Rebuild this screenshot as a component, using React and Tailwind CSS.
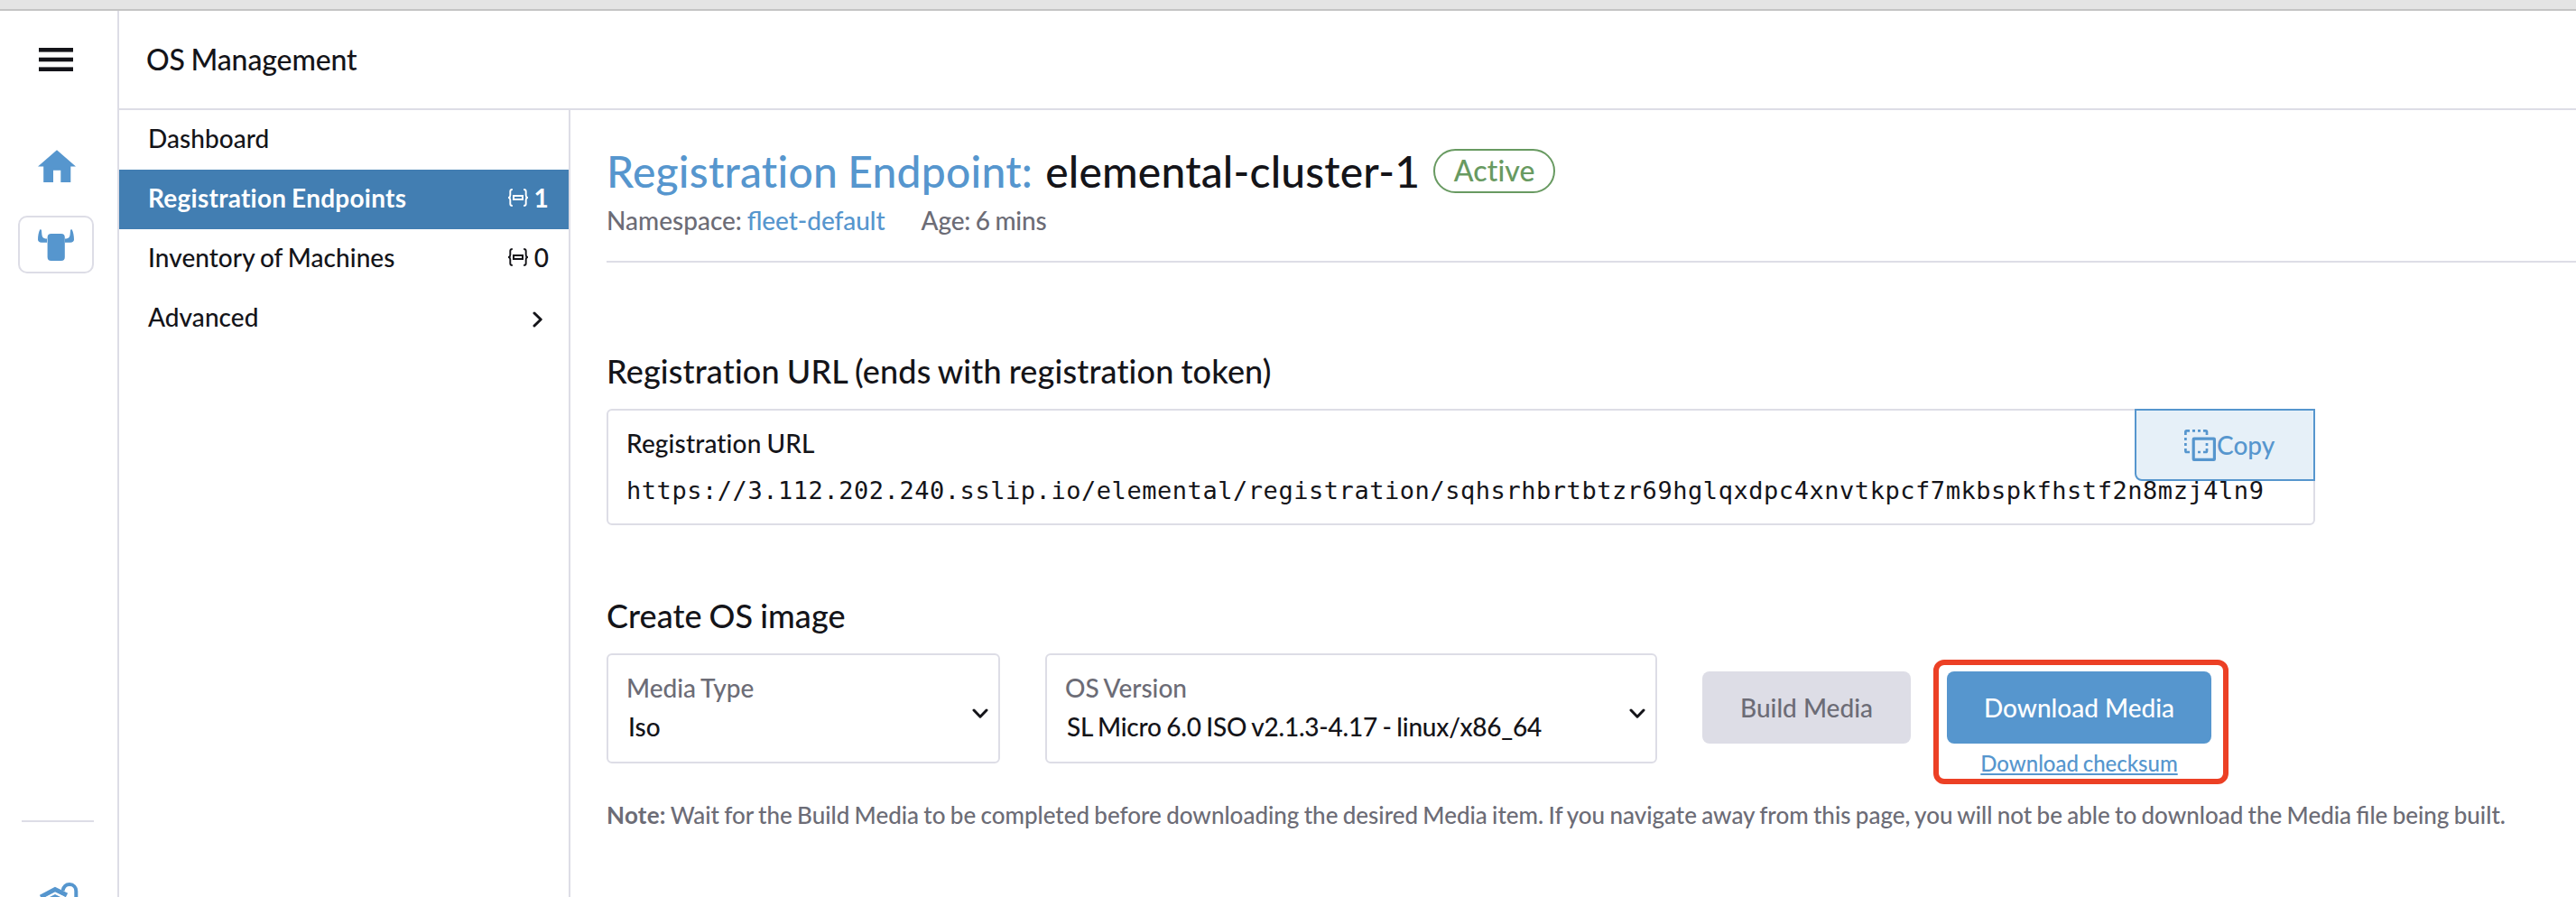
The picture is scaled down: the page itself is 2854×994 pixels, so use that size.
const Hamburger = () => (
  <svg className="block" width="38" height="26" viewBox="0 0 38 26" fill="#141419">
    <rect width="38" height="4.6" />
    <rect y="10.7" width="38" height="4.6" />
    <rect y="21.4" width="38" height="4.6" />
  </svg>
);

const Home = () => (
  <svg className="block" width="42" height="36" viewBox="0 0 42 36" fill="#5696ce">
    <path d="M21 0.3 42 18.5H36.3V36H25.3V22.8H17V36H6.2V18.5H0Z" />
  </svg>
);

const Steer = () => (
  <svg className="block" width="40" height="36" viewBox="0 0 40 36" fill="#5696ce">
    <rect x="10.6" y="5" width="19.2" height="30" rx="4" />
    <path d="M2.2 0.6C3 -0.2 3.8 0.2 4 1.4L4.4 6C4.8 9 6 10 8.5 10.4H10V14.8H4C1.5 14.8 0 13.4 0 11.5C0 8 0.8 3 2.2 0.6Z" />
    <path d="M37.8 0.6C37 -0.2 36.2 0.2 36 1.4L35.6 6C35.2 9 34 10 31.5 10.4H30V14.8H36C38.5 14.8 40 13.4 40 11.5C40 8 39.2 3 37.8 0.6Z" />
  </svg>
);

const Cluster = () => (
  <svg className="block" width="44" height="16" viewBox="0 0 44 16" fill="none" stroke="#5696ce">
    <path d="M1 16 17 7.5 30 14" strokeWidth="5" />
    <path d="M4 18 17 11.5 27 16" stroke="#fff" strokeWidth="1" />
    <path d="M8 17.5 17 13 26 17.5Z" fill="#5696ce" stroke="none" />
    <path d="M25.5 9C26.5 4.5 29.5 2 33 2C37.6 2 40.3 5.5 40.3 9.5V18" strokeWidth="4" />
  </svg>
);

const Namespaced = () => (
  <svg className="block" width="22" height="20" viewBox="0 0 22 20" fill="none" stroke="currentColor" strokeWidth="1.9">
    <path d="M4.8 1Q2.3 1 2.3 3V7.5Q2.3 9.4 0.7 10Q2.3 10.6 2.3 12.5V17Q2.3 19 4.8 19" />
    <path d="M17.2 1Q19.7 1 19.7 3V7.5Q19.7 9.4 21.3 10Q19.7 10.6 19.7 12.5V17Q19.7 19 17.2 19" />
    <rect x="6" y="8" width="10" height="4" strokeWidth="2" />
  </svg>
);

const Chevron = ({ className }) => (
  <svg className={className} width="18" height="12" viewBox="0 0 18 12" fill="none" stroke="#141419" strokeWidth="3" strokeLinecap="round" strokeLinejoin="round">
    <path d="M2 2 9 9.2 16 2" />
  </svg>
);

const CopyIcon = () => (
  <svg className="block" width="35" height="35" viewBox="0 0 35 35" fill="none" stroke="#5696ce">
    <rect x="10.2" y="10.2" width="23.2" height="23.2" rx="0.6" strokeWidth="3.2" />
    <path d="M1.4 6V2.6Q1.4 1.4 2.6 1.4H6M9 1.4H12M15 1.4H18M21 1.4H23.8Q25 1.4 25 2.6V6M1.4 9V12M1.4 15V18M1.4 21V23.8Q1.4 25 2.6 25H6M15 25H18M21 25H23.8Q25 25 25 23.8V21M25 15V18" strokeWidth="2.7" />
  </svg>
);

function NavItem({ label, count, active, children }) {
  return (
    <li
      className={
        active
          ? "flex h-[66px] items-center justify-between bg-[#427eb2] pr-[22px] pb-1 pl-8 font-bold tracking-[0.25px] text-white"
          : "flex h-[66px] items-center justify-between pr-[22px] pb-1 pl-8 tracking-[0.05px]"
      }
    >
      <span>{label}</span>
      {count !== undefined && (
        <span className="flex items-center gap-[7px]">
          <Namespaced />
          <span>{count}</span>
        </span>
      )}
      {children}
    </li>
  );
}

function Select({ label, value, className, valueClass }) {
  return (
    <div className={`relative h-[122px] rounded-md border-2 border-[#dddde6] pt-[17px] pl-5 ${className}`}>
      <div className="h-[42px] leading-[38px] text-[#6c6c76]">{label}</div>
      <div className={`pl-0.5 leading-[40px] ${valueClass}`}>{value}</div>
      <Chevron className="absolute top-[59px] right-[11px]" />
    </div>
  );
}

export default function App() {
  return (
    <div className="flex h-[994px] w-[2854px] flex-col overflow-hidden bg-white font-['Lato',sans-serif] text-[28px] leading-[40px] font-medium whitespace-nowrap text-[#141419] [word-spacing:-0.045em]">
      <div className="h-3 shrink-0 border-b-2 border-[#c4c4c4] bg-[#e4e4e4]" />
      <div className="flex min-h-0 flex-1">
        <aside className="flex w-[132px] shrink-0 flex-col border-r-2 border-[#dddde6]">
          <button className="mt-[41px] ml-[43px] w-[38px]"><Hamburger /></button>
          <a className="mt-[87px] ml-[42px]"><Home /></a>
          <a className="mt-[37px] ml-5 flex h-16 w-[84px] justify-center rounded-[10px] border-2 border-[#dddde6] pt-[13px]"><Steer /></a>
          <div className="mt-[606px] ml-6 h-0.5 w-20 shrink-0 bg-[#dddde6]" />
          <a className="mt-[67px] ml-[44px]"><Cluster /></a>
        </aside>
        <div className="flex min-w-0 flex-1 flex-col">
          <header className="flex h-[110px] shrink-0 items-center border-b-2 border-[#dddde6] pl-[30px] text-[32px] tracking-[-0.13px]">OS Management</header>
          <div className="flex min-h-0 flex-1">
            <nav className="w-[500px] shrink-0 border-r-2 border-[#dddde6]">
              <ul>
                <NavItem label="Dashboard" />
                <NavItem label="Registration Endpoints" count={1} active />
                <NavItem label="Inventory of Machines" count={0} />
                <NavItem label="Advanced">
                  <Chevron className="mt-[5px] mr-[3px] -rotate-90" />
                </NavItem>
              </ul>
            </nav>
            <main className="flex min-w-0 flex-1 flex-col pl-10">
              <div className="mt-[38px] flex h-[60px] items-center">
                <h1 className="flex gap-[14px] text-[48px] leading-[60px]">
                  <span className="tracking-[0.24px] text-[#5696ce]">Registration Endpoint:</span>
                  <span className="tracking-[0.17px]">elemental-cluster-1</span>
                </h1>
                <span className="mb-[2px] ml-[15px] flex h-[49px] w-[135px] items-center justify-center rounded-full border-2 border-[#689a61] pb-[1px] text-[32px] tracking-[0.1px] text-[#689a61]">Active</span>
              </div>
              <div className="mt-1 flex h-10 gap-10 text-[#6c6c76]">
                <span>Namespace: <a className="tracking-[-0.05px] text-[#5696ce] [font-feature-settings:'liga'_1]">fleet-default</a></span>
                <span className="tracking-[-0.2px]">Age: 6 mins</span>
              </div>
              <div className="mt-[25px] h-0.5 shrink-0 bg-[#dddde6]" />
              <h2 className="mt-[98px] text-[36px] leading-[44px] tracking-[0.16px]">Registration URL (ends with registration token)</h2>
              <div className="relative mt-[20px] h-[129px] w-[1893px] shrink-0 rounded-md border-2 border-[#dddde6] pt-[16px] pl-5">
                <div className="tracking-[0.15px]">Registration URL</div>
                <div className="mt-[13px] font-['DejaVu_Sans_Mono',monospace] text-[27px] tracking-[0.545px]">
                  https://3.112.202.240.sslip.io/elemental/registration/sqhsrhbrtbtzr69hglqxdpc4xnvtkpcf7mkbspkfhstf2n8mzj4ln9
                </div>
                <button className="absolute -top-0.5 -right-0.5 flex h-20 w-[200px] items-center rounded-bl-lg border-2 border-[#5696ce] bg-[#e6f0f8] pl-[53px] text-[#5696ce]">
                  <CopyIcon />
                  <span className="ml-px">Copy</span>
                </button>
              </div>
              <h2 className="mt-[78px] text-[36px] leading-[44px] tracking-[0.08px]">Create OS image</h2>
              <div className="mt-[20px] flex h-[122px] shrink-0">
                <Select label="Media Type" value="Iso" className="w-[436px]" valueClass="" />
                <Select label="OS Version" value="SL Micro 6.0 ISO v2.1.3-4.17 - linux/x86_64" className="ml-[50px] w-[678px]" valueClass="tracking-[-0.22px]" />
                <button className="mt-[20px] ml-[50px] h-20 w-[231px] rounded-lg bg-[#dddde6] text-[#6c6c76]">Build Media</button>
                <div className="mt-[7px] ml-[25px] flex h-[138px] w-[327px] shrink-0 flex-col items-center rounded-[12px] border-[6px] border-[#ec4025] pt-[7px] pr-1">
                  <button className="h-20 w-[293px] shrink-0 rounded-lg bg-[#5696ce] text-white">Download Media</button>
                  <a className="mt-0.5 text-[24px] leading-[40px] tracking-[-0.02px] text-[#5696ce] underline">Download checksum</a>
                </div>
              </div>
              <p className="mt-[37px] text-[26px] tracking-[-0.01px] text-[#6c6c76] [font-feature-settings:'liga'_1]">
                <b className="tracking-[0.25px]">Note:</b> Wait for the Build Media to be completed before downloading the desired Media item. If you navigate away from this page, you will not be able to download the Media file being built.
              </p>
            </main>
          </div>
        </div>
      </div>
    </div>
  );
}
